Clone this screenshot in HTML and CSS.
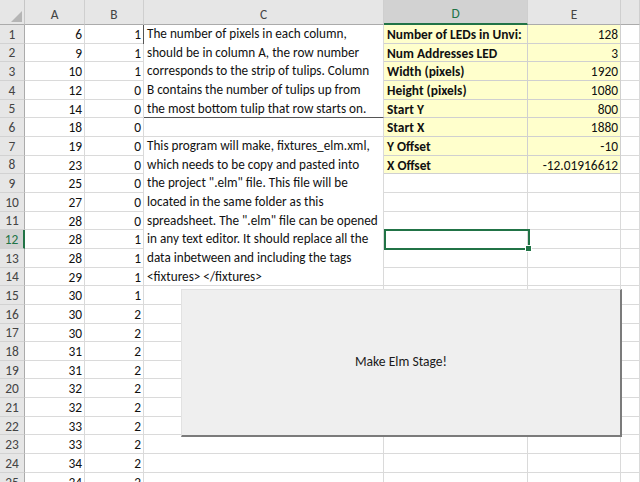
FILE: index.html
```html
<!DOCTYPE html>
<html>
<head>
<meta charset="utf-8">
<link rel="stylesheet" href="styles.css">
</head>
<body>
<div class="sheet">
  <div class="corner"><svg width="13" height="13" viewBox="0 0 13 13"><polygon points="12,1 12,12 1,12" fill="#b5b5b5"/></svg></div>
  <div class="ch">A</div><div class="ch">B</div><div class="ch">C</div><div class="ch sel">D</div><div class="ch">E</div><div class="ch"></div>

  <div class="rh">1</div><div class="c n">6</div><div class="c n">1</div>
  <div class="c txt box1"><span class="ln">The number of pixels in each column,</span><span class="ln">should be in column A, the row number</span><span class="ln">corresponds to the strip of tulips. Column</span><span class="ln">B contains the number of tulips up from</span><span class="ln">the most bottom tulip that row starts on.</span></div>
  <div class="c y lbl">Number of LEDs in Unvi:</div><div class="c y n">128</div><div class="c"></div>

  <div class="rh">2</div><div class="c n">9</div><div class="c n">1</div>
  <div class="c y lbl">Num Addresses LED</div><div class="c y n">3</div><div class="c"></div>

  <div class="rh">3</div><div class="c n">10</div><div class="c n">1</div>
  <div class="c y lbl">Width (pixels)</div><div class="c y n">1920</div><div class="c"></div>

  <div class="rh">4</div><div class="c n">12</div><div class="c n">0</div>
  <div class="c y lbl">Height (pixels)</div><div class="c y n">1080</div><div class="c"></div>

  <div class="rh">5</div><div class="c n">14</div><div class="c n">0</div>
  <div class="c y lbl">Start Y</div><div class="c y n">800</div><div class="c"></div>

  <div class="rh">6</div><div class="c n">18</div><div class="c n">0</div><div class="c"></div>
  <div class="c y lbl">Start X</div><div class="c y n">1880</div><div class="c"></div>

  <div class="rh">7</div><div class="c n">19</div><div class="c n">0</div>
  <div class="c txt box2"><span class="ln">This program will make, fixtures_elm.xml,</span><span class="ln">which needs to be copy and pasted into</span><span class="ln">the project ".elm" file. This file will be</span><span class="ln">located in the same folder as this</span><span class="ln">spreadsheet. The ".elm" file can be opened</span><span class="ln">in any text editor. It should replace all the</span><span class="ln">data inbetween and including the tags</span><span class="ln">&lt;fixtures&gt; &lt;/fixtures&gt;</span></div>
  <div class="c y lbl">Y Offset</div><div class="c y n">-10</div><div class="c"></div>

  <div class="rh">8</div><div class="c n">23</div><div class="c n">0</div>
  <div class="c y lbl">X Offset</div><div class="c y n">-12.01916612</div><div class="c"></div>

  <div class="rh">9</div><div class="c n">25</div><div class="c n">0</div><div class="c"></div><div class="c"></div><div class="c"></div>
  <div class="rh">10</div><div class="c n">27</div><div class="c n">0</div><div class="c"></div><div class="c"></div><div class="c"></div>
  <div class="rh">11</div><div class="c n">28</div><div class="c n">0</div><div class="c"></div><div class="c"></div><div class="c"></div>
  <div class="rh rsel">12</div><div class="c n">28</div><div class="c n">1</div><div class="c"></div><div class="c"></div><div class="c"></div>
  <div class="rh">13</div><div class="c n">28</div><div class="c n">1</div><div class="c"></div><div class="c"></div><div class="c"></div>
  <div class="rh">14</div><div class="c n">29</div><div class="c n">1</div><div class="c"></div><div class="c"></div><div class="c"></div>

  <div class="rh">15</div><div class="c n">30</div><div class="c n">1</div><div class="c"></div><div class="c"></div><div class="c"></div><div class="c"></div>
  <div class="rh">16</div><div class="c n">30</div><div class="c n">2</div><div class="c"></div><div class="c"></div><div class="c"></div><div class="c"></div>
  <div class="rh">17</div><div class="c n">30</div><div class="c n">2</div><div class="c"></div><div class="c"></div><div class="c"></div><div class="c"></div>
  <div class="rh">18</div><div class="c n">31</div><div class="c n">2</div><div class="c"></div><div class="c"></div><div class="c"></div><div class="c"></div>
  <div class="rh">19</div><div class="c n">31</div><div class="c n">2</div><div class="c"></div><div class="c"></div><div class="c"></div><div class="c"></div>
  <div class="rh">20</div><div class="c n">32</div><div class="c n">2</div><div class="c"></div><div class="c"></div><div class="c"></div><div class="c"></div>
  <div class="rh">21</div><div class="c n">32</div><div class="c n">2</div><div class="c"></div><div class="c"></div><div class="c"></div><div class="c"></div>
  <div class="rh">22</div><div class="c n">33</div><div class="c n">2</div><div class="c"></div><div class="c"></div><div class="c"></div><div class="c"></div>
  <div class="rh">23</div><div class="c n">33</div><div class="c n">2</div><div class="c"></div><div class="c"></div><div class="c"></div><div class="c"></div>
  <div class="rh">24</div><div class="c n">34</div><div class="c n">2</div><div class="c"></div><div class="c"></div><div class="c"></div><div class="c"></div>
  <div class="rh">25</div><div class="c n">34</div><div class="c n">2</div><div class="c"></div><div class="c"></div><div class="c"></div><div class="c"></div>

  <div class="selection"><span class="handle"></span></div>
  <div class="button">Make Elm Stage!</div>
</div>
</body>
</html>
```

FILE: styles.css
```css
html, body {
  margin: 0;
  padding: 0;
  background: #ffffff;
  overflow: hidden;
}

.sheet {
  position: relative;
  width: 640px;
  height: 482px;
  overflow: hidden;
  display: grid;
  grid-template-columns: 25px 60px 59px 240px 144px 93px 19px;
  grid-template-rows: 25px repeat(25, 18.667px);
  font-family: "Carlito", "Calibri", "Lato", sans-serif;
  font-size: 13.4px;
  color: #111111;
}

.sheet > div {
  box-sizing: border-box;
  min-width: 0;
  white-space: nowrap;
  overflow: hidden;
}

.corner {
  background: #e6e6e6;
  border-right: 1px solid #c6c6c6;
  border-bottom: 1px solid #ababab;
  display: flex;
  align-items: flex-end;
  justify-content: flex-end;
  padding: 0 1px 1px 0;
}

.corner svg {
  display: block;
}

.ch {
  background: #e6e6e6;
  color: #444444;
  border-right: 1px solid #cfcfcf;
  border-bottom: 1px solid #ababab;
  display: flex;
  align-items: center;
  justify-content: center;
  padding-top: 4px;
  font-size: 13.4px;
}

.ch.sel {
  background: #d2d2d2;
  color: #217346;
  border-bottom: 2px solid #217346;
}

.rh {
  background: #e6e6e6;
  color: #444444;
  border-right: 1px solid #ababab;
  border-bottom: 1px solid #d2d2d2;
  display: flex;
  align-items: center;
  justify-content: center;
  padding-top: 1px;
  font-size: 13.4px;
}

.rh.rsel {
  background: #d2d2d2;
  color: #217346;
  border-right: 2px solid #217346;
}

.c {
  background: #ffffff;
  border-right: 1px solid #dadada;
  border-bottom: 1px solid #dadada;
  line-height: 18px;
  padding-top: 1px;
}

.n {
  text-align: right;
  padding-right: 2px;
}

.y {
  background: #ffffcc;
  border-right-color: #d0d0d0;
  border-bottom-color: #d0d0d0;
}

.lbl {
  font-weight: bold;
  padding-left: 3px;
}

.txt {
  padding: 0 0 0 3px;
  line-height: 18.667px;
  font-size: 13.2px;
}

.ln {
  display: block;
}

.box1 {
  grid-row: span 5;
  border-left: 1px solid #555555;
  border-bottom: 1px solid #555555;
  margin-left: -1px;
}

.box2 {
  grid-row: span 8;
}

.selection {
  position: absolute;
  left: 384px;
  top: 229px;
  width: 146px;
  height: 21px;
  box-sizing: border-box;
  border: 2px solid #217346;
  overflow: visible !important;
}

.handle {
  position: absolute;
  right: -4px;
  bottom: -4px;
  width: 5px;
  height: 5px;
  background: #217346;
  border: 1px solid #ffffff;
}

.button {
  position: absolute;
  left: 181px;
  top: 289px;
  width: 441px;
  height: 148px;
  box-sizing: border-box;
  background: #efefef;
  border-top: 1px solid #e2e2e2;
  border-left: 1px solid #e2e2e2;
  border-right: 2px solid #7b7b7b;
  border-bottom: 2px solid #7b7b7b;
  display: flex;
  align-items: center;
  justify-content: center;
  font-size: 13.6px;
  color: #1a1a1a;
  padding-bottom: 2px;
}
```
